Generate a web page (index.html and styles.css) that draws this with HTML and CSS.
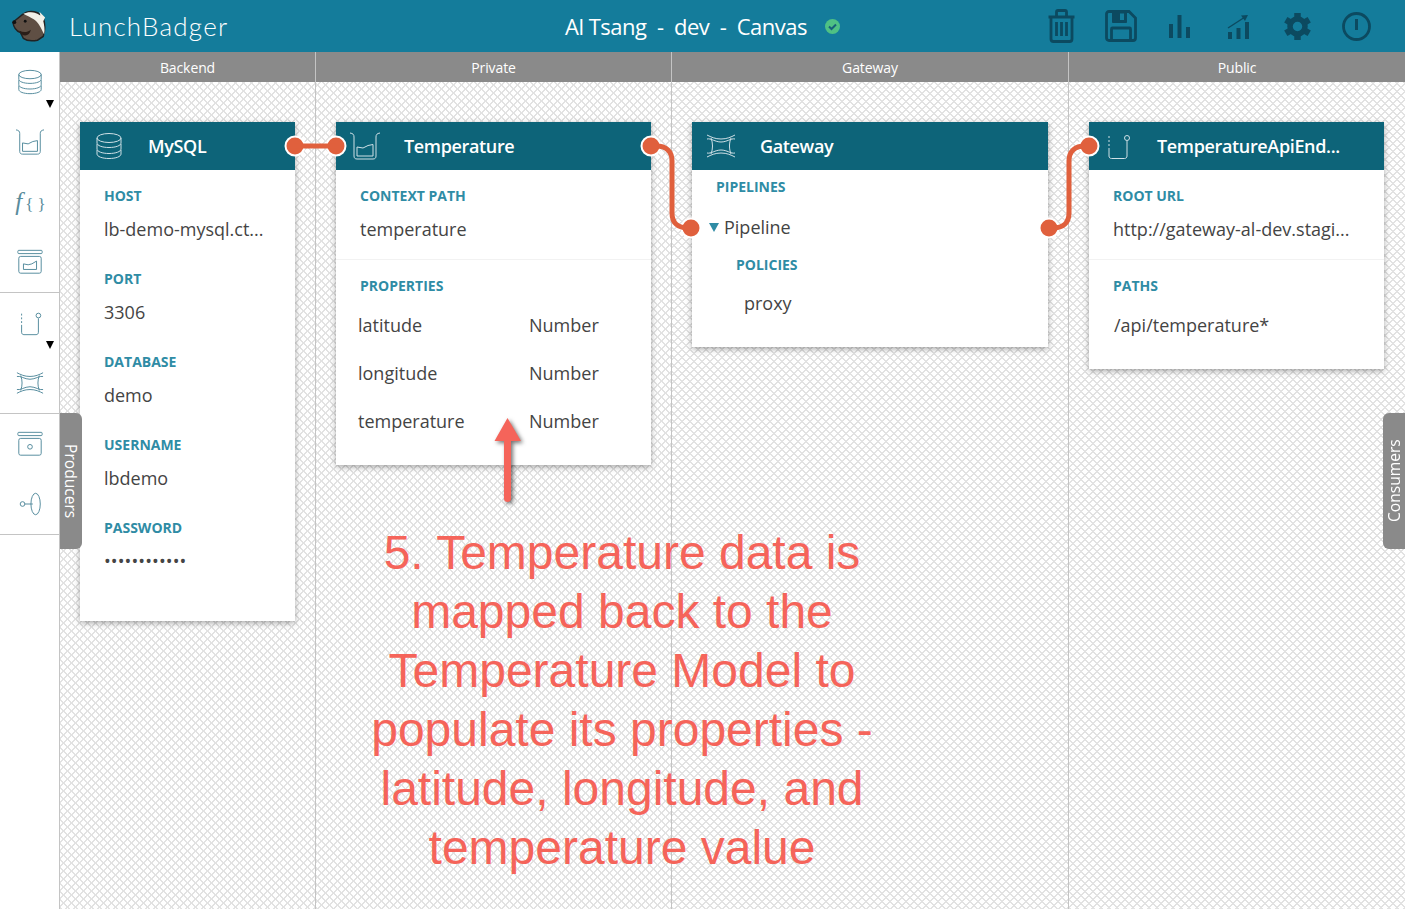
FILE: index.html
```html
<!DOCTYPE html>
<html lang="en">
<head>
    <meta charset="UTF-8">
    <title>LunchBadger</title>
    <link rel="stylesheet" href="styles.css">
</head>
<body>
    <svg class="defs" width="0" height="0">
        <symbol id="i-db" viewBox="0 0 30 30">
            <ellipse cx="15" cy="7" rx="12" ry="4.500"/>
            <path d="M3 7v5c0 2.500 5 4.500 12 4.500s12-2 12-4.500V7"/>
            <path d="M3 13v5c0 2.500 5 4.500 12 4.500s12-2 12-4.500v-5"/>
            <path d="M3 19v4c0 2.500 5 4.500 12 4.500s12-2 12-4.500v-4"/>
        </symbol>
        <symbol id="i-model" viewBox="0 0 30 30">
            <path d="M0 2c3 .5 4 1.500 4 4v19c0 2 1 3 3 3h16c2 0 3-1 3-3V6c0-2.500 1-3.500 4-4"/>
            <path d="M7 25V16l6 1 5-2.500 5-1V25z"/>
        </symbol>
        <symbol id="i-service" viewBox="0 0 30 30">
            <rect x="2" y="2.500" width="26" height="3.500" rx="1"/>
            <rect x="3" y="9" width="24" height="18" rx="2"/>
            <path d="M8 23v-6l5 1 4-1 5-3v9z"/>
        </symbol>
        <symbol id="i-endpoint" viewBox="0 0 30 30">
            <path d="M6 5v2M6 9v2M6 13v2"/>
            <path d="M6 17v8c0 1.500 1 2.500 2.500 2.500h13c1.500 0 2.500-1 2.500-2.500V10"/>
            <circle cx="24" cy="7" r="2.500"/>
        </symbol>
        <symbol id="i-gateway" viewBox="0 0 30 30">
            <path d="M1 4c4 2 8 4 14 4s10-2 14-4"/>
            <path d="M1 8c4-1 8 3 14 3s10-4 14-3"/>
            <path d="M1 26c4-2 8-4 14-4s10 2 14 4"/>
            <path d="M1 22c4 1 8-3 14-3s10 4 14 3"/>
            <path d="M5 7c2 5 2 11 0 16M25 7c-2 5-2 11 0 16"/>
        </symbol>
        <symbol id="i-box" viewBox="0 0 30 30">
            <rect x="2" y="2.500" width="26" height="3.500" rx="1"/>
            <rect x="3" y="9" width="24" height="18" rx="2"/>
            <circle cx="15" cy="18" r="2.500"/>
        </symbol>
        <symbol id="i-client" viewBox="0 0 30 30">
            <circle cx="7" cy="15" r="2.500"/>
            <path d="M9.500 15H18"/>
            <ellipse cx="21" cy="15" rx="5" ry="11.500"/>
        </symbol>
    </svg>

    <header class="topbar">
        <div class="brand">
            <svg class="badger" width="36" height="36" viewBox="0 0 38 38">
                <path d="M2 15 12 7c5-4 11-4 16-2l6 5c2 6 2 14 0 20l-6 4c-5 1-11 1-15-2l-3-6c-3-1-7-4-8-11z" fill="#5f4f44" stroke="#222" stroke-width="1.500"/>
                <path d="M13 6c5-2 11-3 18 2l-1-4 6 6-2 4c1 4 2 8 1 14-3-6-6-13-11-16-3-2-7-4-11-6z" fill="#f2f0e8"/>
                <path d="M9 24c4 2 8 2 12-1-1 4-3 6-6 6-3 0-5-2-6-5z" fill="#2a1d18"/>
                <circle cx="3.500" cy="15" r="2" fill="#111"/>
                <circle cx="15" cy="14" r="1.500" fill="#111"/>
            </svg>
            <span class="brand-name">LunchBadger</span>
        </div>
        <div class="project">
            <span class="project-name">Al Tsang  -  dev  -  Canvas</span>
            <svg class="status" width="15" height="15" viewBox="0 0 15 15">
                <circle cx="7.500" cy="7.500" r="7.500" fill="#4fc184"/>
                <path d="M4 7.500l2.500 2.500L11 5.500" fill="none" stroke="#17607a" stroke-width="2"/>
            </svg>
        </div>
        <nav class="actions">
            <span class="action">
                <svg width="29" height="34" viewBox="0 0 28 34">
                    <path d="M1 8h26M9 7V3c0-1 .5-1.500 1.500-1.500h7C18.500 1.500 19 2 19 3v4M3.500 8v22c0 1.500 1 2.500 2.500 2.500h16c1.500 0 2.500-1 2.500-2.500V8" fill="none" stroke="currentColor" stroke-width="2.800"/>
                    <path d="M9 13v14M14 13v14M19 13v14" fill="none" stroke="currentColor" stroke-width="2.800"/>
                </svg>
            </span>
            <span class="action">
                <svg width="32" height="32" viewBox="0 0 32 32">
                    <path d="M1.500 4c0-1.500 1-2.500 2.500-2.500h20L30.500 8v20c0 1.500-1 2.500-2.500 2.500H4c-1.500 0-2.500-1-2.500-2.500z" fill="none" stroke="currentColor" stroke-width="2.800"/>
                    <path d="M7 2v10c0 .5.500 1 1 1h13c.5 0 1-.5 1-1V2z" fill="currentColor"/>
                    <rect x="15" y="3.500" width="4" height="6.500" fill="#147c9b"/>
                    <path d="M6.500 30V19c0-.5.500-1 1-1h17c.5 0 1 .5 1 1v11" fill="none" stroke="currentColor" stroke-width="2.800"/>
                </svg>
            </span>
            <span class="action">
                <svg width="21" height="23" viewBox="0 0 21 23">
                    <path d="M0 9h4v14H0zM8.500 0h4v23h-4zM17 12h4v11h-4z" fill="currentColor"/>
                </svg>
            </span>
            <span class="action">
                <svg width="23" height="25" viewBox="0 0 23 25">
                    <path d="M1 14 18 3" fill="none" stroke="currentColor" stroke-width="1.400"/>
                    <path d="M14 1.500l7-.5-3 6z" fill="currentColor"/>
                    <path d="M1 18h4v7H1zM9.500 14h4v11h-4zM18 8h4v17h-4z" fill="currentColor"/>
                </svg>
            </span>
            <span class="action action-gear">
                <svg width="27" height="27" viewBox="0 0 27 27">
                    <circle cx="13.500" cy="13.500" r="7.500" fill="none" stroke="currentColor" stroke-width="5.500"/>
                    <g stroke="currentColor" stroke-width="6.500">
                        <path d="M13.500 0v5M13.500 22v5"/>
                        <path d="M1.800 6.750l4.300 2.500M20.900 17.750l4.300 2.500"/>
                        <path d="M1.800 20.250l4.300-2.500M20.900 9.250l4.300-2.500"/>
                    </g>
                </svg>
            </span>
            <span class="action">
                <svg width="29" height="29" viewBox="0 0 29 29">
                    <circle cx="14.500" cy="14.500" r="13" fill="none" stroke="currentColor" stroke-width="2.800"/>
                    <path d="M14.500 7v11" fill="none" stroke="currentColor" stroke-width="3"/>
                </svg>
            </span>
        </nav>
    </header>

    <div class="workspace">
        <aside class="sidebar">
            <div class="tool-group">
                <div class="tool"><svg class="icon tool-icon"><use href="#i-db"/></svg><span class="caret"></span></div>
                <div class="tool"><svg class="icon tool-icon"><use href="#i-model"/></svg></div>
                <div class="tool"><span class="fn-icon"><i class="fn-f">f</i>{ }</span></div>
                <div class="tool"><svg class="icon tool-icon"><use href="#i-service"/></svg></div>
            </div>
            <div class="tool-group">
                <div class="tool"><svg class="icon tool-icon"><use href="#i-endpoint"/></svg><span class="caret"></span></div>
                <div class="tool"><svg class="icon tool-icon"><use href="#i-gateway"/></svg></div>
            </div>
            <div class="tool-group">
                <div class="tool"><svg class="icon tool-icon"><use href="#i-box"/></svg></div>
                <div class="tool"><svg class="icon tool-icon"><use href="#i-client"/></svg></div>
            </div>
        </aside>

        <main class="canvas">
            <section class="col col-backend">
                <h2 class="col-title">Backend</h2>
                <div class="col-body">
                    <article class="card">
                        <div class="card-head"><svg class="icon head-icon"><use href="#i-db"/></svg><span class="card-name">MySQL</span></div>
                        <div class="card-body">
                            <div class="field"><div class="label">Host</div><div class="value">lb-demo-mysql.ct...</div></div>
                            <div class="field"><div class="label">Port</div><div class="value">3306</div></div>
                            <div class="field"><div class="label">Database</div><div class="value">demo</div></div>
                            <div class="field"><div class="label">Username</div><div class="value">lbdemo</div></div>
                            <div class="field"><div class="label">Password</div><div class="value value-secret">••••••••••••</div></div>
                        </div>
                    </article>
                </div>
            </section>

            <section class="col col-private">
                <h2 class="col-title">Private</h2>
                <div class="col-body">
                    <article class="card">
                        <div class="card-head"><svg class="icon head-icon"><use href="#i-model"/></svg><span class="card-name">Temperature</span></div>
                        <div class="card-body">
                            <div class="field field-split"><div class="label">Context path</div><div class="value">temperature</div></div>
                            <div class="label">Properties</div>
                            <div class="prop-row"><span>latitude</span><span>Number</span></div>
                            <div class="prop-row"><span>longitude</span><span>Number</span></div>
                            <div class="prop-row"><span>temperature</span><span>Number</span></div>
                        </div>
                    </article>
                </div>
            </section>

            <section class="col col-gateway">
                <h2 class="col-title">Gateway</h2>
                <div class="col-body">
                    <article class="card">
                        <div class="card-head"><svg class="icon head-icon"><use href="#i-gateway"/></svg><span class="card-name">Gateway</span></div>
                        <div class="card-body card-body-gateway">
                            <div class="label">Pipelines</div>
                            <div class="pipeline"><span class="pipeline-caret"></span>Pipeline</div>
                            <div class="label label-policies">Policies</div>
                            <div class="policy">proxy</div>
                        </div>
                    </article>
                </div>
            </section>

            <section class="col col-public">
                <h2 class="col-title">Public</h2>
                <div class="col-body">
                    <article class="card">
                        <div class="card-head"><svg class="icon head-icon"><use href="#i-endpoint"/></svg><span class="card-name">TemperatureApiEnd...</span></div>
                        <div class="card-body">
                            <div class="field field-split"><div class="label">Root URL</div><div class="value">http://gateway-al-dev.stagi...</div></div>
                            <div class="label">Paths</div>
                            <div class="prop-row path-row">/api/temperature*</div>
                        </div>
                    </article>
                </div>
            </section>
        </main>
    </div>

    <div class="drawer drawer-left">Producers</div>
    <div class="drawer drawer-right">Consumers</div>

    <!-- connections between the ports, plus the red arrow -->
    <svg class="overlay" width="1405" height="909" viewBox="0 0 1405 909">
        <g class="ports">
            <circle cx="295" cy="146" r="9.500"/>
            <circle cx="336" cy="146" r="9.500"/>
            <circle cx="651" cy="146" r="9.500"/>
            <circle cx="691" cy="228" r="9.500"/>
            <circle cx="1049" cy="228" r="9.500"/>
            <circle cx="1089" cy="146" r="9.500"/>
        </g>
        <g class="wires">
            <path d="M295 146H336"/>
            <path d="M651 146h5c10 0 16 5 16 15v52c0 10 6 15 16 15h3"/>
            <path d="M1049 228h4c10 0 16-5 16-15v-52c0-10 6-15 16-15h4"/>
        </g>
        <path class="arrow" d="M507.500 418 521 441h-10v58c0 4-7 4-7 0v-58h-9.500z"/>
    </svg>

    <p class="callout">5. Temperature data is<br>mapped back to the<br>Temperature Model to<br>populate its properties -<br>latitude, longitude, and<br>temperature value</p>
</body>
</html>
```

FILE: styles.css
```css
html, body {
    margin: 0;
    height: 100%;
    overflow: hidden;
}
body {
    position: relative;
    font-family: 'Open Sans', sans-serif;
    color: #444;
    background: #fff;
}
.defs {
    position: absolute;
}
.icon {
    fill: none;
    stroke: currentColor;
    stroke-width: 1;
}

/* top bar */
.topbar {
    height: 52px;
    background: #147c9b;
    display: grid;
    grid-template-columns: 1fr auto 1fr;
    align-items: center;
    color: #fff;
}
.brand {
    display: flex;
    align-items: center;
    padding-left: 11px;
}
.brand-name {
    margin-left: 22px;
    font-family: 'Lato', sans-serif;
    font-weight: 300;
    font-size: 26px;
    letter-spacing: 1.2px;
}
.project {
    display: flex;
    align-items: center;
    gap: 18px;
}
.project-name {
    font-size: 22px;
    white-space: pre;
    letter-spacing: -0.5px;
}
.actions {
    display: flex;
    justify-content: flex-end;
    padding-right: 19px;
    color: #0c4a60;
}
.action {
    width: 59px;
    display: flex;
    justify-content: center;
    align-items: center;
}

/* main area */
.workspace {
    display: flex;
    height: 857px;
}
.sidebar {
    width: 59px;
    border-right: 1px solid #c4c4c4;
    color: #4d8699;
}
.tool-group {
    border-bottom: 1px solid #c4c4c4;
}
.tool {
    position: relative;
    height: 60px;
    display: flex;
    align-items: center;
    justify-content: center;
}
.tool-icon {
    width: 28px;
    height: 28px;
}
.fn-icon {
    font-family: 'Liberation Serif', serif;
    font-size: 17px;
    white-space: nowrap;
    color: #5a8c9c;
    margin-left: 2px;
}
.fn-f {
    font-size: 25px;
    margin-right: 3px;
}
.caret {
    position: absolute;
    right: 5px;
    bottom: 4px;
    width: 0;
    height: 0;
    border-left: 4px solid transparent;
    border-right: 4px solid transparent;
    border-top: 8px solid #000;
}

.canvas {
    flex: 1;
    display: flex;
}
.col {
    border-right: 1px solid #c4c4c4;
    display: flex;
    flex-direction: column;
    box-sizing: border-box;
}
.col-backend { width: 256px; }
.col-private { width: 356px; }
.col-gateway { width: 397px; }
.col-public { width: 336px; border-right: 0; }
.col-title {
    margin: 0;
    height: 30px;
    line-height: 32px;
    background: #8a8a8a;
    color: #fff;
    font-size: 14px;
    font-weight: 400;
    letter-spacing: -0.1px;
    text-align: center;
}
.col-body {
    flex: 1;
    padding: 40px 20px 0;
    background-color: #fff;
    background-image:
        repeating-linear-gradient(45deg, #e2e2e2 0 1.6px, transparent 1.6px 5.657px),
        repeating-linear-gradient(-45deg, #e2e2e2 0 1.6px, transparent 1.6px 5.657px);
}
.col-public .col-body {
    padding-right: 21px;
}

/* cards */
.card {
    background: #fff;
    box-shadow: 0 2px 6px rgba(0, 0, 0, 0.35);
}
.card-head {
    height: 48px;
    background: #0d6479;
    display: flex;
    align-items: center;
    color: #cfe0e6;
}
.head-icon {
    width: 30px;
    height: 30px;
    margin-left: 14px;
    margin-right: 24px;
    flex: none;
}
.card-name {
    font-size: 18px;
    font-weight: 600;
    color: #fff;
    letter-spacing: -0.35px;
}
.card-body {
    padding: 16px 0 20px;
}
.label {
    margin-left: 24px;
    height: 20px;
    line-height: 20px;
    font-size: 14px;
    font-weight: 700;
    color: #2f8ca5;
    text-transform: uppercase;
}
.value {
    margin: 11px 0 0 24px;
    height: 24px;
    line-height: 24px;
    font-size: 18px;
    color: #444;
    white-space: nowrap;
}
.value-secret {
    letter-spacing: 0.1px;
}
.field {
    margin-bottom: 28px;
}
.field-split {
    margin-bottom: 16px;
    padding-bottom: 18px;
    border-bottom: 1px solid #f2f2f2;
}
.prop-row {
    display: grid;
    grid-template-columns: 171px 1fr;
    height: 48px;
    align-items: center;
    margin-left: 22px;
    font-size: 18px;
}
.prop-row:nth-child(3) {
    margin-top: 5px;
}
.path-row {
    margin-left: 25px;
}
.card-body-gateway {
    padding-top: 7px;
}
.pipeline {
    margin: 18px 0 0 17px;
    height: 24px;
    line-height: 24px;
    font-size: 18px;
    display: flex;
    align-items: center;
}
.pipeline-caret {
    width: 0;
    height: 0;
    margin-right: 5px;
    border-left: 5px solid transparent;
    border-right: 5px solid transparent;
    border-top: 9px solid #2f8ca5;
}
.label-policies {
    margin: 16px 0 0 44px;
}
.policy {
    margin: 16px 0 0 52px;
    height: 24px;
    line-height: 24px;
    font-size: 18px;
    padding-bottom: 12px;
}

/* side drawers */
.drawer {
    position: absolute;
    top: 413px;
    width: 22px;
    height: 136px;
    background: #8a8a8a;
    color: #fff;
    font-size: 15.6px;
    line-height: 22px;
    text-align: center;
    writing-mode: vertical-rl;
    border-radius: 0 6px 6px 0;
}
.drawer-left {
    left: 60px;
}
.drawer-right {
    right: 0;
    transform: rotate(180deg);
}

/* overlay */
.overlay {
    position: absolute;
    left: 0;
    top: 0;
    pointer-events: none;
}
.wires path {
    fill: none;
    stroke: #e0603d;
    stroke-width: 5;
}
.ports circle {
    fill: #e0603d;
    stroke: #fff;
    stroke-width: 2;
}
.arrow {
    fill: #f5645a;
    filter: drop-shadow(2px 2px 2px rgba(0, 0, 0, 0.55));
}
.callout {
    position: absolute;
    left: 322px;
    top: 523px;
    width: 600px;
    margin: 0;
    font-family: 'Liberation Sans', sans-serif;
    font-size: 48px;
    line-height: 59px;
    text-align: center;
    color: #f5645a;
}
```
